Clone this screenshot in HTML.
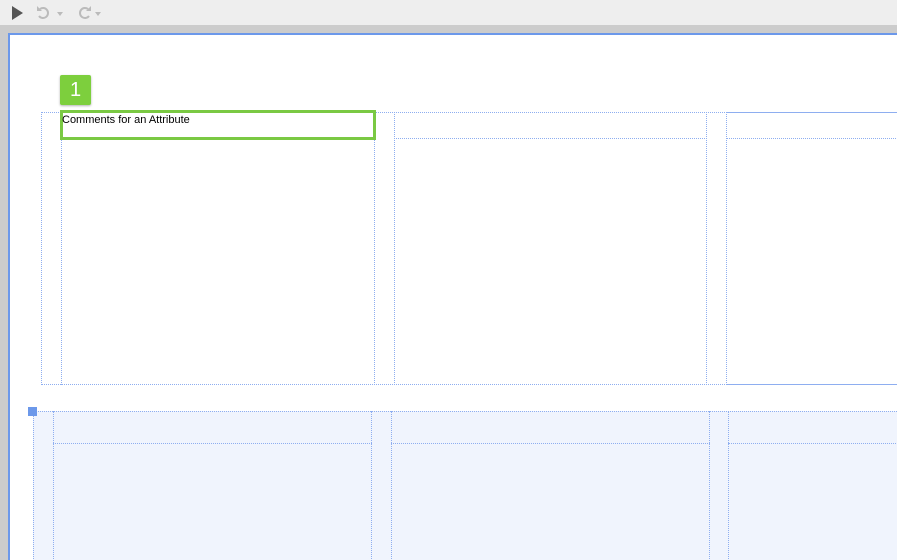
<!DOCTYPE html>
<html><head><style>
*{margin:0;padding:0;box-sizing:border-box}
html,body{width:897px;height:560px;overflow:hidden}
body{background:#cccccc;font-family:"Liberation Sans",sans-serif;position:relative}
.a{position:absolute}
.d{position:absolute;border:1px dotted #8eaef0}
</style></head><body>
<div class="a" style="left:0;top:0;width:897px;height:25px;background:#eeeeee"></div>
<svg class="a" style="left:0;top:0" width="120" height="25">
<path d="M12 6 L23 13 L12 20 Z" fill="#555"/>
<path d="M40 9 A5 5 0 1 1 39 16" stroke="#bbb" stroke-width="2" fill="none"/><path d="M37 6 L37 11 L42 11Z" fill="#bbb"/>
<path d="M57 12 L63 12 L60 16Z" fill="#bbb"/>
<path d="M88 9 A5 5 0 1 0 89 16" stroke="#bbb" stroke-width="2" fill="none"/><path d="M91 6 L91 11 L86 11Z" fill="#bbb"/>
<path d="M95 12 L101 12 L98 16Z" fill="#bbb"/>
</svg>
<div class="a" style="left:8px;top:33px;width:900px;height:540px;background:#fff;border-left:2px solid #6c98ea;border-top:2px solid #6c98ea"></div>
<div class="d" style="left:41px;top:112px;width:870px;height:273px"></div>
<div class="d" style="left:61px;top:112px;width:314px;height:273px;border-top:none"></div>
<div class="d" style="left:394px;top:112px;width:313px;height:273px"></div>
<div class="d" style="left:394px;top:138px;width:313px;height:0;border-width:1px 0 0 0"></div>
<div class="d" style="left:726px;top:112px;width:200px;height:273px"></div>
<div class="d" style="left:726px;top:138px;width:200px;height:0;border-width:1px 0 0 0"></div>
<div class="a" style="left:60px;top:110px;width:316px;height:30px;border:3px solid #7ac943"></div>
<div class="a" style="left:62px;top:114px;font-size:11px;color:#000">Comments for an Attribute</div>
<div class="a" style="left:60px;top:75px;width:31px;height:30px;background:#7dcf3d;border-radius:2px;box-shadow:0 1px 2px rgba(0,0,0,.3);color:#fff;font-size:20px;text-align:center;line-height:30px">1</div>
<div class="a" style="left:33px;top:411px;width:870px;height:160px;background:#f0f4fd"></div>
<div class="d" style="left:33px;top:411px;width:870px;height:160px"></div>
<div class="d" style="left:53px;top:411px;width:319px;height:160px;border-top:none"></div>
<div class="d" style="left:53px;top:443px;width:319px;height:0;border-width:1px 0 0 0"></div>
<div class="d" style="left:391px;top:411px;width:319px;height:160px;border-top:none"></div>
<div class="d" style="left:391px;top:443px;width:319px;height:0;border-width:1px 0 0 0"></div>
<div class="d" style="left:728px;top:411px;width:200px;height:160px;border-top:none"></div>
<div class="d" style="left:728px;top:443px;width:200px;height:0;border-width:1px 0 0 0"></div>
<div class="a" style="left:28px;top:407px;width:9px;height:9px;background:#6c98ea"></div>
</body></html>
